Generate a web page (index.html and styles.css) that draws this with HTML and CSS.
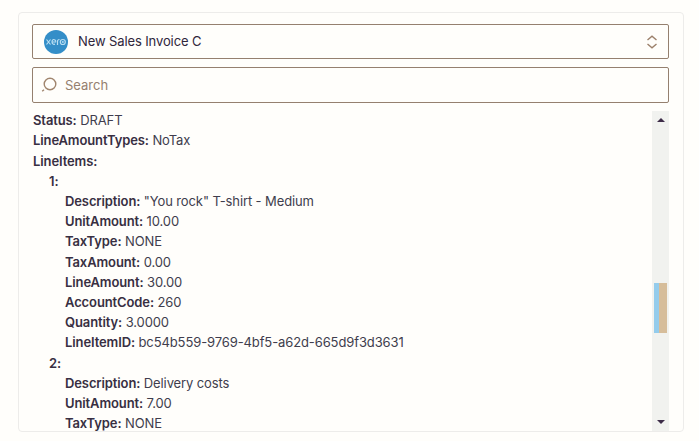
FILE: index.html
```html
<!DOCTYPE html>
<html lang="en">
<head>
<meta charset="utf-8">
<title>New Sales Invoice C</title>
<link rel="stylesheet" href="styles.css">
</head>
<body>
<main class="panel">
  <div class="field select">
    <svg class="logo" width="24" height="24" viewBox="0 0 24 24">
      <circle cx="12" cy="12" r="12" fill="#348ec8"/>
      <g fill="none" stroke="#b9def2" stroke-width="1.2">
        <path d="M2.500 9.500 6.500 14.500M6.500 9.500 2.500 14.500M11 14.200c-3.800 1-3.800-5 -1-4.700 1.800 0 1.800 2.500 1.500 2.500H7.800M13.500 15V11.500q0-2 2-2"/>
        <circle cx="18.800" cy="12" r="2.500"/>
        <circle cx="18.800" cy="12" r=".4"/>
      </g>
    </svg>
    <span class="select-name">New Sales Invoice C</span>
    <svg class="chevrons" width="12" height="14" viewBox="0 0 12 14"><path d="M1.500 5 6 1.200 10.500 5M1.500 9 6 12.800 10.500 9"/></svg>
  </div>
  <div class="field search">
    <svg class="lens" width="16" height="16" viewBox="0 0 16 16"><circle cx="9" cy="7" r="5.800"/><path d="M3 12.800 1.200 14.300"/></svg>
    <span>Search</span>
  </div>
  <div class="results">
    <div class="data">
      <p><b>Status:</b> DRAFT</p>
      <p><b>LineAmountTypes:</b> NoTax</p>
      <p><b>LineItems:</b></p>
      <div class="nest">
        <p><b>1:</b></p>
        <div class="nest">
          <p><b>Description:</b> "You rock" T-shirt - Medium</p>
          <p><b>UnitAmount:</b> 10.00</p>
          <p><b>TaxType:</b> NONE</p>
          <p><b>TaxAmount:</b> 0.00</p>
          <p><b>LineAmount:</b> 30.00</p>
          <p><b>AccountCode:</b> 260</p>
          <p><b>Quantity:</b> 3.0000</p>
          <p><b>LineItemID:</b> bc54b559-9769-4bf5-a62d-665d9f3d3631</p>
        </div>
        <p><b>2:</b></p>
        <div class="nest">
          <p><b>Description:</b> Delivery costs</p>
          <p><b>UnitAmount:</b> 7.00</p>
          <p><b>TaxType:</b> NONE</p>
        </div>
      </div>
    </div>
    <div class="scrollbar">
      <svg width="8" height="4" viewBox="0 0 8 4"><path d="M0 4 4 0 8 4z"/></svg>
      <div class="track"><div class="thumb"></div></div>
      <svg width="8" height="4" viewBox="0 0 8 4"><path d="M0 0 4 4 8 0z"/></svg>
    </div>
  </div>
</main>
</body>
</html>
```

FILE: styles.css
```css
* { box-sizing: border-box; }
body {
  margin: 0;
  height: 441px;
  padding: 12px 15px 9px 18px;
  overflow: hidden;
  background: #fffefb;
  color: #403d4d;
  font: 13px/20.2px Inter, "Liberation Sans", sans-serif;
  letter-spacing: -0.11px;
}
.panel {
  display: flex;
  flex-direction: column;
  height: 420px;
  padding: 11px 14px 0 13px;
  border: 1px solid #edecea;
  border-radius: 4px;
}
.field {
  display: flex;
  flex: none;
  align-items: center;
  border: 1px solid #95806f;
  border-radius: 2px;
}
.select { height: 35px; padding: 0 10px 0 11px; color: #30263b; }
.select-name { margin-left: 10px; flex: 1; }
.chevrons { fill: none; stroke: #9c806b; stroke-width: 1.4; }
.search { height: 36px; margin: 8px 0; padding-left: 8px; color: #95806f; letter-spacing: 0; }
.search span { margin-left: 8px; }
.lens { fill: none; stroke: #a0856e; stroke-width: 1.4; }
.results { display: flex; height: 320px; overflow: hidden; }
.data { flex: 1; margin-top: -0.9px; padding-left: 1px; }
.data p { margin: 0; white-space: nowrap; }
.data b { color: #382f42; font-weight: 600; }
.nest { padding-left: 16px; }
.scrollbar {
  display: flex;
  flex-direction: column;
  align-items: center;
  width: 17px;
  padding: 7px 0;
  background: #f1f2ef;
}
.scrollbar svg { flex: none; fill: #3d2c48; }
.track { flex: 1; padding-top: 161px; }
.thumb {
  width: 13px;
  height: 50px;
  background: linear-gradient(90deg, #94ccec 0 5px, transparent 5px),
    linear-gradient(#d6bd9a, #d6bd9a);
}
```
